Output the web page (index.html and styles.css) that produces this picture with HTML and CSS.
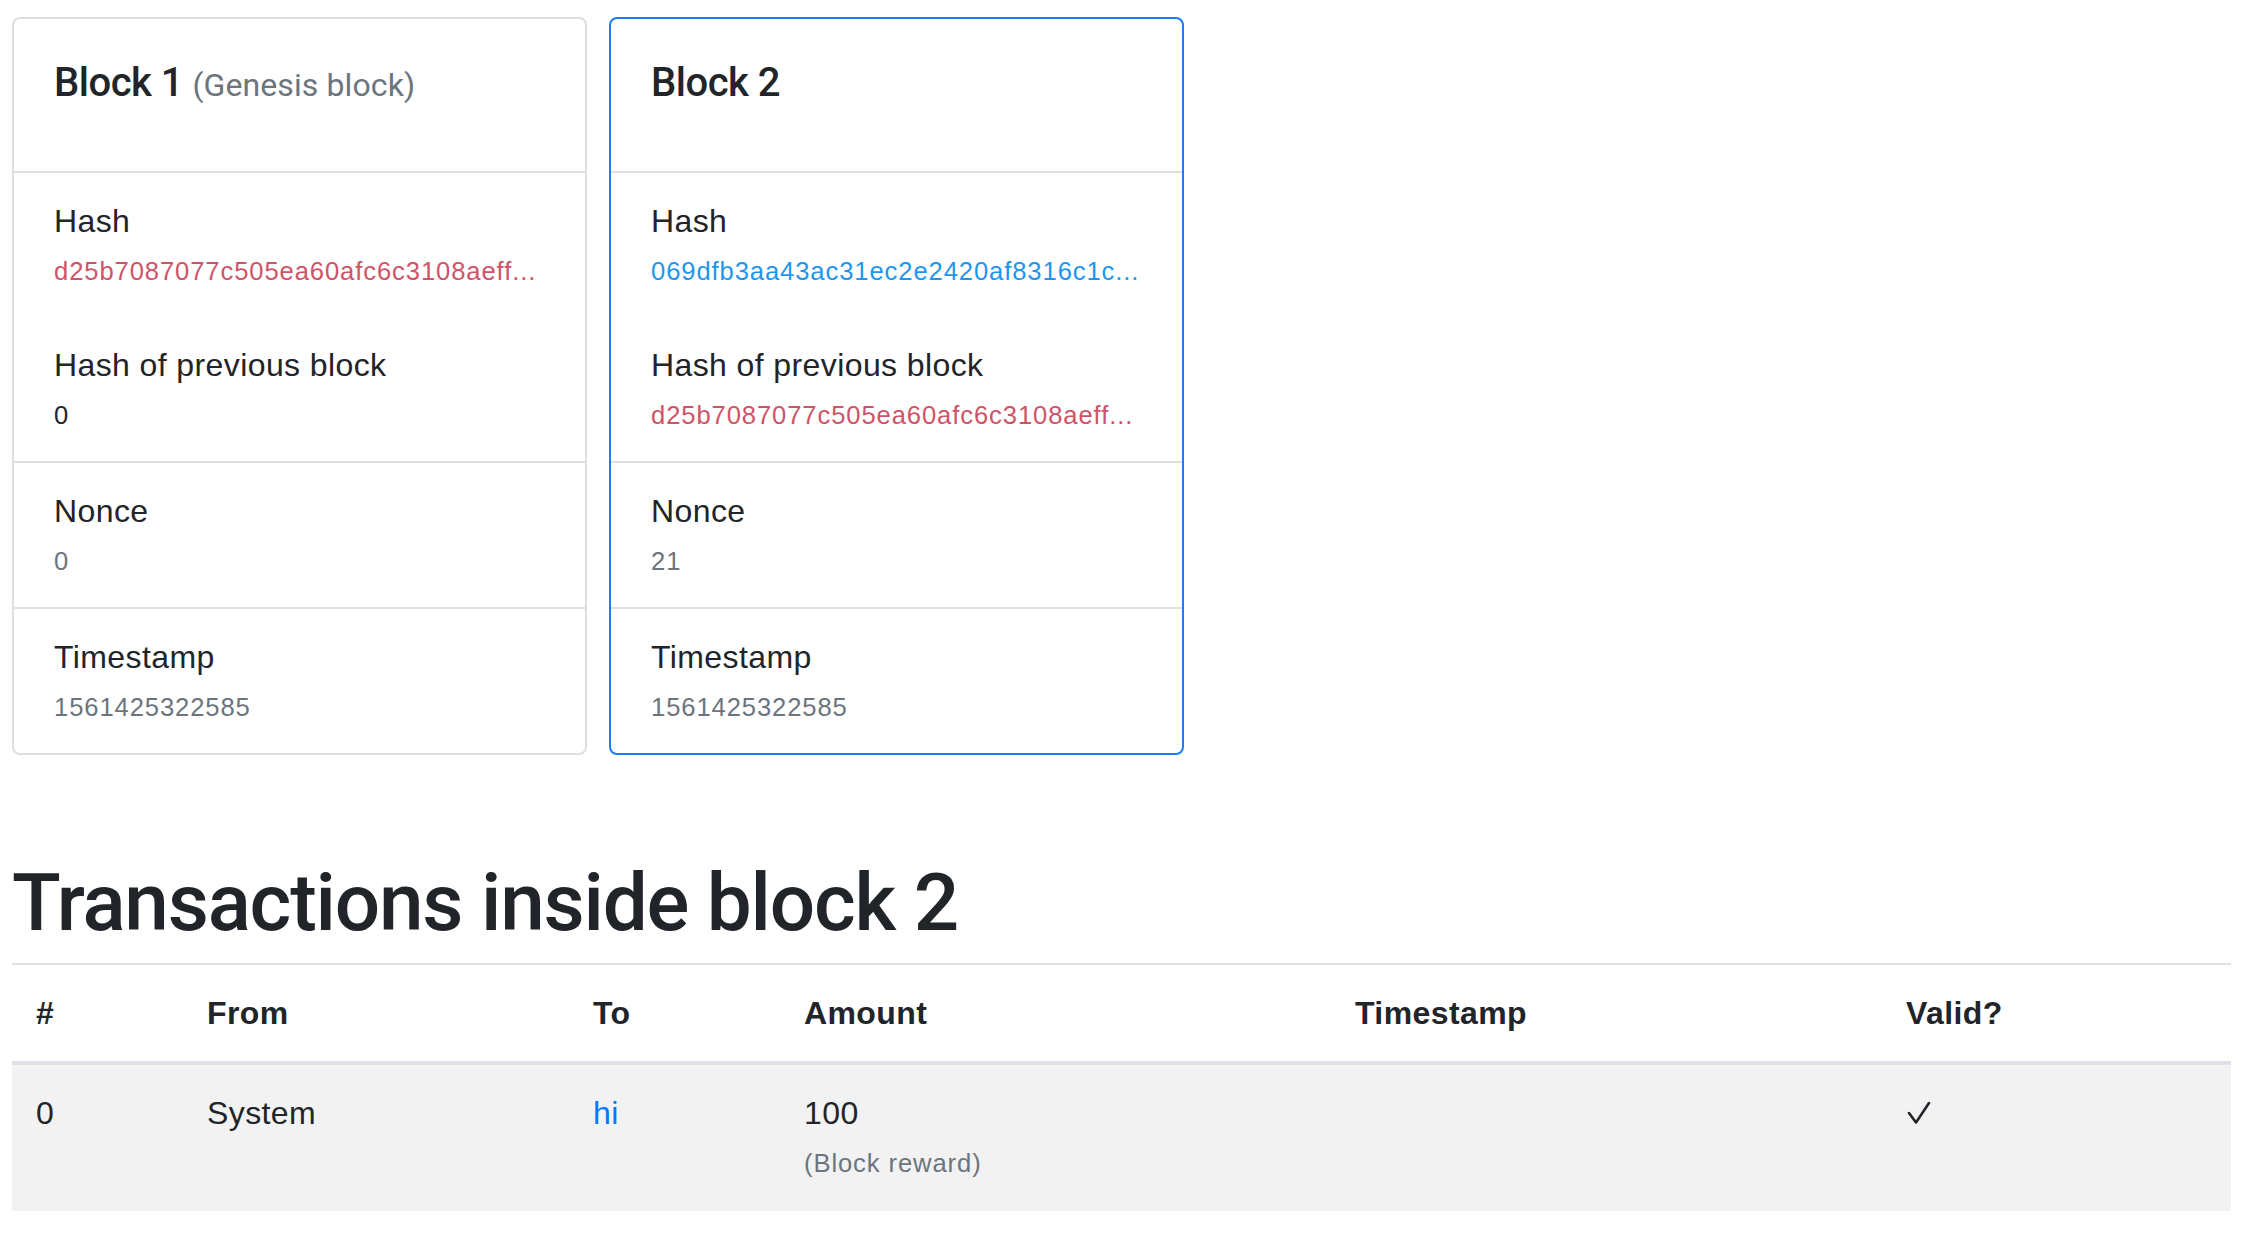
FILE: index.html
```html
<!DOCTYPE html>
<html lang="en">
<head>
<meta charset="utf-8">
<title>Blockchain</title>
<link rel="stylesheet" href="styles.css">
</head>
<body>
<div class="blocks">
  <div class="card">
    <div class="card-body">
      <h5 class="card-title">Block 1 <small class="muted">(Genesis block)</small></h5>
    </div>
    <div class="list-item">
      <div class="line">Hash</div>
      <div class="line"><small class="hash-bad">d25b7087077c505ea60afc6c3108aeff...</small></div>
      <div class="line"></div>
      <div class="line">Hash of previous block</div>
      <div class="line"><small>0</small></div>
    </div>
    <div class="list-item">
      <div class="line">Nonce</div>
      <div class="line"><small class="muted">0</small></div>
    </div>
    <div class="list-item">
      <div class="line">Timestamp</div>
      <div class="line"><small class="muted">1561425322585</small></div>
    </div>
  </div>
  <div class="card card-selected">
    <div class="card-body">
      <h5 class="card-title">Block 2</h5>
    </div>
    <div class="list-item">
      <div class="line">Hash</div>
      <div class="line"><small class="hash-ok">069dfb3aa43ac31ec2e2420af8316c1c...</small></div>
      <div class="line"></div>
      <div class="line">Hash of previous block</div>
      <div class="line"><small class="hash-bad">d25b7087077c505ea60afc6c3108aeff...</small></div>
    </div>
    <div class="list-item">
      <div class="line">Nonce</div>
      <div class="line"><small class="muted">21</small></div>
    </div>
    <div class="list-item">
      <div class="line">Timestamp</div>
      <div class="line"><small class="muted">1561425322585</small></div>
    </div>
  </div>
</div>

<h1 class="title">Transactions inside block 2</h1>

<table class="tx-table">
  <thead>
    <tr>
      <th class="c-num">#</th>
      <th class="c-from">From</th>
      <th class="c-to">To</th>
      <th class="c-amount">Amount</th>
      <th class="c-time">Timestamp</th>
      <th class="c-valid">Valid?</th>
    </tr>
  </thead>
  <tbody>
    <tr>
      <td>0</td>
      <td>System</td>
      <td><span class="link">hi</span></td>
      <td>100<br><small class="muted">(Block reward)</small></td>
      <td></td>
      <td><svg class="check" width="26" height="24" viewBox="0 0 26 24" aria-label="valid"><polyline points="3,13 10,22.5 23,3" fill="none" stroke="#212529" stroke-width="2.6" stroke-linecap="round" stroke-linejoin="round"/></svg></td>
    </tr>
  </tbody>
</table>
</body>
</html>
```

FILE: styles.css
```css
* {
  box-sizing: border-box;
}

body {
  margin: 0;
  padding: 17px 25px 40px 12px;
  font-family: "Liberation Sans", Arial, sans-serif;
  font-size: 32px;
  line-height: 48px;
  letter-spacing: 0.4px;
  color: #212529;
  background: #ffffff;
}

small {
  font-size: 25.6px;
  letter-spacing: 0.9px;
}

.muted {
  color: #6c757d;
}

.hash-bad {
  color: #cf5468;
}

.hash-ok {
  color: #1f96ee;
}

.blocks {
  display: flex;
  gap: 22px;
  align-items: flex-start;
}

.card {
  width: 575px;
  border: 2px solid #dfdfdf;
  border-radius: 8px;
  background: #ffffff;
}

.card-selected {
  border-color: #1a7ff7;
}

.card-body {
  padding: 40px;
}

.card-title {
  margin: 0 0 24px 0;
  font-family: Roboto, "Liberation Sans", sans-serif;
  font-size: 40px;
  line-height: 48px;
  font-weight: 500;
  letter-spacing: -0.5px;
}

.card-title small {
  font-family: Roboto, "Liberation Sans", sans-serif;
  font-size: 32px;
  font-weight: 400;
  line-height: 1;
  letter-spacing: 0.1px;
}

.list-item {
  border-top: 2px solid #dfdfdf;
  padding: 24px 40px;
}

.line {
  height: 48px;
  white-space: nowrap;
}

.title {
  margin: 100px 0 12px 0;
  font-family: Roboto, "Liberation Sans", sans-serif;
  font-size: 80px;
  line-height: 96px;
  font-weight: 500;
  letter-spacing: -1.2px;
}

.tx-table {
  width: 100%;
  border-collapse: collapse;
  table-layout: fixed;
}

.tx-table th,
.tx-table td {
  text-align: left;
  vertical-align: top;
  padding: 24px;
  line-height: 48px;
}

.tx-table th {
  font-weight: 700;
  border-top: 2px solid #dee2e6;
  border-bottom: 4px solid #dee2e6;
}

.tx-table tbody tr {
  background: #f2f2f2;
}

.c-num { width: 171px; }
.c-from { width: 386px; }
.c-to { width: 211px; }
.c-amount { width: 551px; }
.c-time { width: 551px; }
.c-valid { width: auto; }

.link {
  color: #007bff;
}

.check {
  display: inline-block;
  vertical-align: top;
  margin-top: 11px;
}
```
